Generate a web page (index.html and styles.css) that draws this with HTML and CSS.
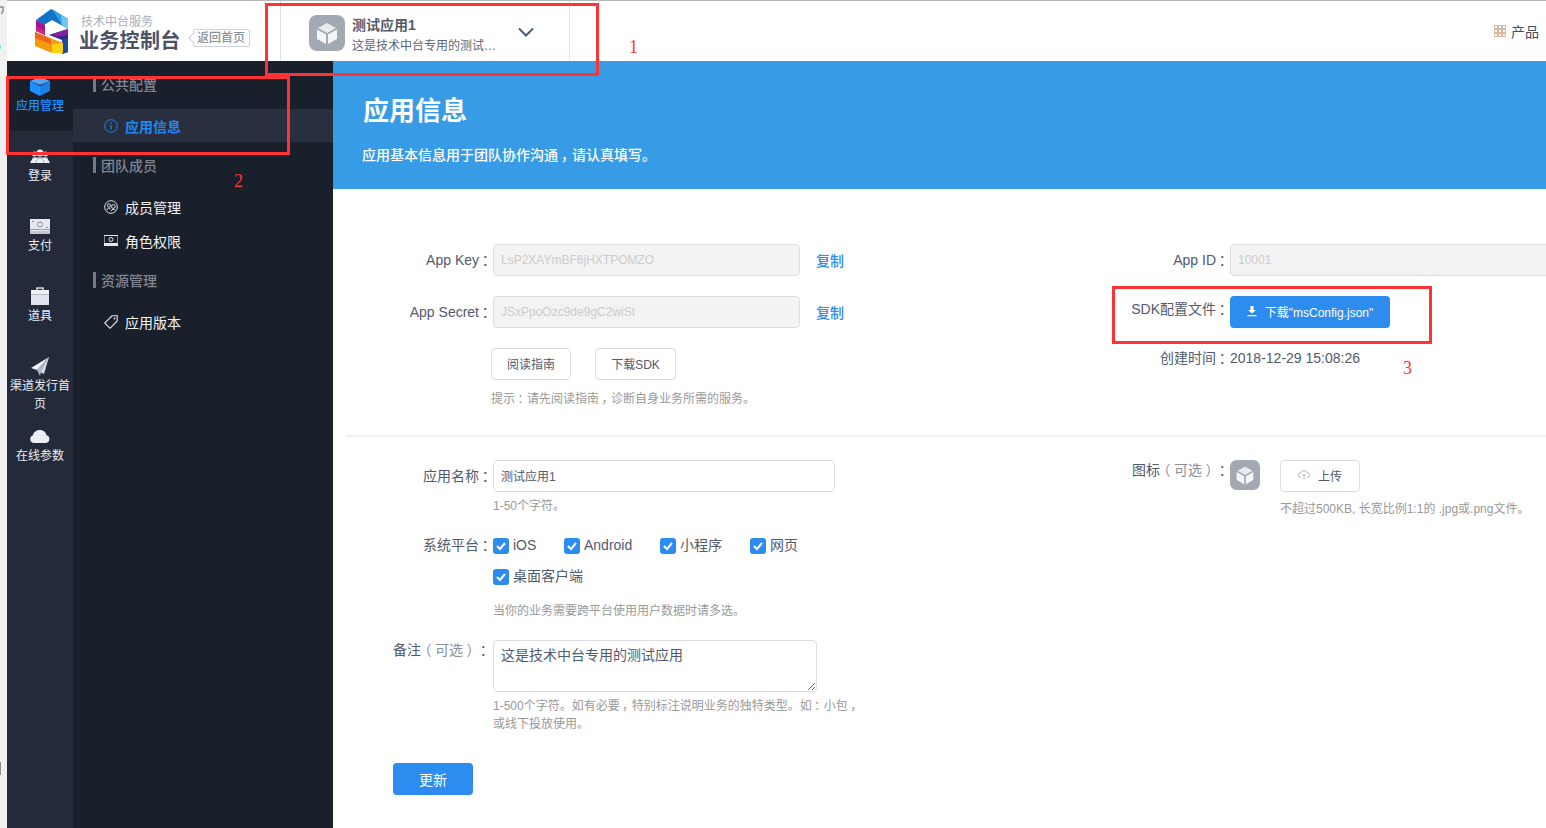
FILE: index.html
```html
<!DOCTYPE html>
<html lang="zh-CN">
<head>
<meta charset="utf-8">
<title>应用信息</title>
<link rel="stylesheet" href="styles.css">
</head>
<body>
<div class="strip">
  <svg viewBox="0 0 7 828" width="7" height="828">
    <path d="M0 7h3v3.500L1.500 14" fill="none" stroke="#8b8b8b" stroke-width="1.500"/>
    <rect x="0" y="45" width="1" height="4" fill="#7fe3ee"/>
    <rect x="0" y="762" width="1" height="13" fill="#8e8e8e"/>
  </svg>
</div>
<div class="app">
  <header class="topbar">
    <a class="brand">
      <svg class="logo" viewBox="0 0 36 48" width="36" height="48">
        <polygon points="2,12 17,1 34,11 34,20 27,17 18,12 10,17 2,12" fill="#1273c9"/>
        <polygon points="18,1 34,11 34,20 27,16" fill="#2f9fe0"/>
        <polygon points="27,7 34,11 34,21 28,18" fill="#6cc6ee"/>
        <polygon points="2,12 11,17 11,27 2,23" fill="#a3188f"/>
        <polygon points="2,19 11,23 11,27 2,23" fill="#d0247a"/>
        <polygon points="15,27 34,21 34,44 28,46 28,32" fill="#2a2a8f"/>
        <polygon points="18,26 34,21 34,27 22,29" fill="#8a1f9a"/>
        <polygon points="28,32 34,30 34,44 28,46" fill="#1b4aa8"/>
        <polygon points="1,24 11,28 29,35 29,45 18,45 1,38" fill="#f59a0c"/>
        <polygon points="1,24 11,28 17,31 17,36 1,30" fill="#f2641e"/>
        <polygon points="18,36 29,35 29,45 18,45" fill="#fbd014"/>
      </svg>
      <div class="brand-text">
        <div class="brand-sub">技术中台服务</div>
        <div class="brand-main">业务控制台</div>
      </div>
      <span class="back-tag">返回首页</span>
    </a>
    <div class="app-select">
      <svg class="cube-tile" viewBox="0 0 36 36" width="36" height="36">
        <rect width="36" height="36" rx="8" fill="#a3a9b2"/>
        <polygon points="18,8 27,13 18,18 9,13" fill="#e9ebee"/>
        <polygon points="8,14.500 17,19.500 17,29 8,24" fill="#f4f5f7"/>
        <polygon points="28,14.500 19,19.500 19,29 28,24" fill="#f4f5f7"/>
      </svg>
      <div class="app-meta">
        <div class="app-name">测试应用1</div>
        <div class="app-desc">这是技术中台专用的测试…</div>
      </div>
      <svg class="chevron" viewBox="0 0 16 10" width="16" height="10"><path d="M1 1.500 8 8.500 15 1.500" fill="none" stroke="#4a5a78" stroke-width="2"/></svg>
    </div>
    <div class="product">
      <svg viewBox="0 0 12 12" width="12" height="12"><g fill="none" stroke="#d9b8a0" stroke-width="1"><rect x=".5" y=".5" width="3" height="3"/><rect x="4.500" y=".5" width="3" height="3"/><rect x="8.500" y=".5" width="3" height="3"/><rect x=".5" y="4.500" width="3" height="3"/><rect x="4.500" y="4.500" width="3" height="3"/><rect x="8.500" y="4.500" width="3" height="3"/><rect x=".5" y="8.500" width="3" height="3"/><rect x="4.500" y="8.500" width="3" height="3"/><rect x="8.500" y="8.500" width="3" height="3"/></g></svg>
      <span>产品</span>
    </div>
  </header>
  <div class="body">
    <nav class="rail">
      <div class="rail-item active">
        <svg viewBox="0 0 20 19" width="20" height="19"><polygon points="0,4 10,9 10,19 0,14" fill="#1e90ff"/><polygon points="20,4 10,9 10,19 20,14" fill="#1a7fe6"/><polygon points="10,0 20,4 10,8 0,4" fill="#4aa8ff"/></svg>
        <span>应用管理</span>
      </div>
      <div class="rail-item">
        <svg viewBox="0 0 20 19" width="20" height="19"><g fill="#eceef3"><circle cx="10" cy="6" r="3.500"/><circle cx="4.500" cy="7" r="2.500"/><circle cx="15.500" cy="7" r="2.500"/><path d="M0 16 3 10.500H17L20 16z"/></g><path d="M6 16c0-3 1.500-5 4-5s4 2 4 5" fill="none" stroke="#9aa0ad" stroke-width=".8"/></svg>
        <span>登录</span>
      </div>
      <div class="rail-item">
        <svg viewBox="0 0 20 19" width="20" height="19"><rect y="2" width="20" height="13" fill="#e6e8ee"/><rect y="12" width="20" height="1" fill="#9aa0ad"/><rect y="14" width="20" height="3" fill="#c2c6d0"/><circle cx="10" cy="7.500" r="2.500" fill="none" stroke="#8a90a0"/><rect x="2" y="4" width="2" height="1" fill="#8a90a0"/><rect x="16" y="10" width="2" height="1" fill="#8a90a0"/></svg>
        <span>支付</span>
      </div>
      <div class="rail-item">
        <svg viewBox="0 0 20 19" width="20" height="19"><path d="M7 3V1h6v2" fill="none" stroke="#d8dbe4" stroke-width="1.500"/><rect x="1" y="3" width="18" height="4" fill="#f0f1f5"/><rect x="1" y="7" width="18" height="1" fill="#b9bdca"/><rect x="1" y="8" width="18" height="10" fill="#e0e3ee"/></svg>
        <span>道具</span>
      </div>
      <div class="rail-item">
        <svg viewBox="0 0 20 19" width="20" height="19"><polygon points="19,0 1,11 7,13" fill="#f0f2f6"/><polygon points="19,0 8,14 14,17" fill="#d3dbe6"/><polygon points="19,0 7,13 10,19 11,15" fill="#aeb7c4"/></svg>
        <span>渠道发行首页</span>
      </div>
      <div class="rail-item">
        <svg viewBox="0 0 20 19" width="20" height="19"><path d="M4 16a4 4 0 0 1-1-7.800C3.500 5 6.500 3 10 3s6 2.500 6.500 5.200A4 4 0 0 1 16 16z" fill="#eceef3"/></svg>
        <span>在线参数</span>
      </div>
    </nav>
    <aside class="subnav">
      <div class="sub-title">公共配置</div>
      <div class="sub-item active">
        <svg viewBox="0 0 14 14" width="14" height="14"><circle cx="7" cy="7" r="6.300" fill="none" stroke="#1e7fe6"/><rect x="6.400" y="6" width="1.300" height="4.500" fill="#1e7fe6"/><rect x="6.400" y="3.500" width="1.300" height="1.400" fill="#1e7fe6"/></svg>
        <span>应用信息</span>
      </div>
      <div class="sub-title sub-gap">团队成员</div>
      <div class="sub-item">
        <svg viewBox="0 0 14 14" width="14" height="14"><circle cx="7" cy="7" r="6.300" fill="none" stroke="#dfe2e8"/><circle cx="5" cy="5.500" r="1.600" fill="none" stroke="#dfe2e8"/><circle cx="9.300" cy="6.500" r="1.900" fill="none" stroke="#dfe2e8"/><path d="M3 10c.5-2 3-2.500 3.500-1M7 11c.3-2 4-2 4.500-.5" fill="none" stroke="#dfe2e8"/></svg>
        <span>成员管理</span>
      </div>
      <div class="sub-item">
        <svg viewBox="0 0 14 14" width="14" height="14"><rect y="1.500" width="14" height="8" fill="none" stroke="#e6e8ee"/><rect y="9.500" width="14" height="2.500" fill="#e6e8ee"/><circle cx="7" cy="5.500" r="2" fill="none" stroke="#e6e8ee"/></svg>
        <span>角色权限</span>
      </div>
      <div class="sub-title sub-gap-sm">资源管理</div>
      <div class="sub-item">
        <svg viewBox="0 0 14 14" width="14" height="14"><path d="M8 .8h5.200V6L6 13.300.7 8z" fill="none" stroke="#e6e8ee" stroke-width="1.100"/><circle cx="10.500" cy="3.500" r=".9" fill="#e6e8ee"/></svg>
        <span>应用版本</span>
      </div>
    </aside>
    <main class="main">
      <section class="banner">
        <h1>应用信息</h1>
        <p>应用基本信息用于团队协作沟通<i class="p">，</i>请认真填写。</p>
      </section>
      <section class="grid top-grid">
        <div class="col">
          <div class="row">
            <label class="label">App Key<i class="p">：</i></label>
            <input class="input disabled" type="text" value="LsP2XAYmBF6jHXTPOMZO" disabled>
            <a class="copy">复制</a>
          </div>
          <div class="row">
            <label class="label">App Secret<i class="p">：</i></label>
            <input class="input disabled" type="text" value="JSxPpoOzc9de9gC2wiSt" disabled>
            <a class="copy">复制</a>
          </div>
          <div class="actions">
            <button class="btn" type="button">阅读指南</button>
            <button class="btn btn-sdk" type="button">下载SDK</button>
          </div>
          <p class="hint hint-actions">提示<i class="p">：</i>请先阅读指南<i class="p">，</i>诊断自身业务所需的服务。</p>
        </div>
        <div class="col">
          <div class="row">
            <label class="label label-wide">App ID<i class="p">：</i></label>
            <input class="input input-id disabled" type="text" value="10001" disabled>
          </div>
          <div class="row">
            <label class="label label-wide label-up">SDK配置文件<i class="p">：</i></label>
            <button class="btn-primary btn-download" type="button">
              <svg viewBox="0 0 10 12" width="10" height="12"><path d="M3.500 1h3v4H9L5 8.500 1 5h2.500zM.5 10h9v1.200h-9z" fill="#fff"/></svg>
              <span>下载"msConfig.json"</span>
            </button>
          </div>
          <div class="row-text">
            <span class="label label-wide">创建时间<i class="p">：</i></span><span class="value">2018-12-29 15:08:26</span>
          </div>
        </div>
      </section>
      <div class="divider"></div>
      <section class="grid bottom-grid">
        <div class="col">
          <div class="row-block">
            <label class="label">应用名称<i class="p">：</i></label>
            <div class="field">
              <input class="input input-name" type="text" value="测试应用1">
              <p class="hint hint-name">1-50个字符。</p>
            </div>
          </div>
          <div class="row-block platforms-row">
            <label class="label label-line">系统平台<i class="p">：</i></label>
            <div class="field">
              <div class="checks">
                <span class="check w-ios"><i class="box"><svg viewBox="0 0 16 16" width="16" height="16"><path d="M4 8l3 3 5-6" fill="none" stroke="#fff" stroke-width="2"/></svg></i><span>iOS</span></span>
                <span class="check w-android"><i class="box"><svg viewBox="0 0 16 16" width="16" height="16"><path d="M4 8l3 3 5-6" fill="none" stroke="#fff" stroke-width="2"/></svg></i><span>Android</span></span>
                <span class="check w-mini"><i class="box"><svg viewBox="0 0 16 16" width="16" height="16"><path d="M4 8l3 3 5-6" fill="none" stroke="#fff" stroke-width="2"/></svg></i><span>小程序</span></span>
                <span class="check"><i class="box"><svg viewBox="0 0 16 16" width="16" height="16"><path d="M4 8l3 3 5-6" fill="none" stroke="#fff" stroke-width="2"/></svg></i><span>网页</span></span>
                <span class="check w-full"><i class="box"><svg viewBox="0 0 16 16" width="16" height="16"><path d="M4 8l3 3 5-6" fill="none" stroke="#fff" stroke-width="2"/></svg></i><span>桌面客户端</span></span>
              </div>
              <p class="hint hint-platform">当你的业务需要跨平台使用用户数据时请多选。</p>
            </div>
          </div>
          <div class="row-block note-row">
            <label class="label label-top label-note">备注<em><i class="q">（</i>可选<i class="q">）</i></em><i class="p">：</i></label>
            <div class="field">
              <textarea class="textarea">这是技术中台专用的测试应用</textarea>
              <p class="hint hint-note">1-500个字符。如有必要<i class="p">，</i>特别标注说明业务的独特类型。如<i class="p">：</i>小包<i class="p">，</i>或线下投放使用。</p>
            </div>
          </div>
          <button class="btn-primary btn-update" type="button">更新</button>
        </div>
        <div class="col">
          <div class="row-block">
            <label class="label label-wide label-top">图标<em><i class="q">（</i>可选<i class="q">）</i></em><i class="p">：</i></label>
            <div class="field">
              <div class="upload-row">
                <svg viewBox="0 0 36 36" width="30" height="30"><rect width="36" height="36" rx="8" fill="#a3a9b2"/><polygon points="18,8 27,13 18,18 9,13" fill="#e9ebee"/><polygon points="8,14.500 17,19.500 17,29 8,24" fill="#f4f5f7"/><polygon points="28,14.500 19,19.500 19,29 28,24" fill="#f4f5f7"/></svg>
                <button class="btn btn-upload" type="button">
                  <svg viewBox="0 0 12 10" width="12" height="10"><path d="M3 7.500H2.500a2.200 2.200 0 0 1 0-4.400C3 1.500 4.500.7 6 .7s3 .8 3.500 2.400a2.200 2.200 0 0 1 0 4.400H9M6 9.500V4.500M4.300 6 6 4.300 7.700 6" fill="none" stroke="#b5b9c2"/></svg>
                  <span>上传</span>
                </button>
              </div>
              <p class="hint hint-upload">不超过500KB, 长宽比例1:1的 .jpg或.png文件。</p>
            </div>
          </div>
        </div>
      </section>
    </main>
  </div>
</div>
<div class="annot annot-1"></div>
<div class="annot annot-2"></div>
<div class="annot annot-3"></div>
<span class="mark mark-1">1</span>
<span class="mark mark-2">2</span>
<span class="mark mark-3">3</span>
</body>
</html>
```

FILE: styles.css
```css
* { box-sizing: border-box; }
html, body { margin: 0; height: 100%; }
body {
  position: relative;
  display: flex;
  height: 828px;
  overflow: hidden;
  background: #fff;
  font-family: "Liberation Sans", "Noto Sans CJK SC", sans-serif;
  font-size: 14px;
  color: #515a6e;
  text-spacing-trim: space-all;
}
p, h1 { margin: 0; }
em { font-style: normal; color: #8a909c; }
.p { font-style: normal; font-feature-settings: "halt"; padding: 0 .3em 0 .2em; }
.q { font-style: normal; font-feature-settings: "halt"; padding: 0 .25em; }

.strip { width: 7px; flex: none; background: #f0f0f0; }
.strip svg { display: block; }
.app { flex: 1; min-width: 0; display: flex; flex-direction: column; }

.topbar {
  height: 61px;
  flex: none;
  display: flex;
  align-items: stretch;
  background: #fff;
  border-top: 1px solid #b5b5b5;
}
.brand { width: 273px; flex: none; display: flex; align-items: flex-start; padding: 7px 0 0 27px; }
.logo { flex: none; }
.brand-text { margin-left: 10px; padding-top: 5px; }
.brand-sub { font-size: 12px; line-height: 16px; color: #a9aebb; padding: 1px 0 0 1px; }
.brand-main { font-size: 20px; line-height: 23px; font-weight: 700; letter-spacing: .3px; color: #4a5366; margin-left: -1px; }
.back-tag {
  position: relative;
  margin: 21px 0 0 12px;
  width: 57px;
  height: 18px;
  border: 1px solid #ccd0d8;
  border-radius: 2px;
  font-size: 12px;
  line-height: 16px;
  text-align: center;
  font-weight: 500;
  color: #8a909c;
}
.back-tag::before {
  content: "";
  position: absolute;
  left: -4px;
  top: 4px;
  width: 7px;
  height: 7px;
  background: #fff;
  border-left: 1px solid #ccd0d8;
  border-bottom: 1px solid #ccd0d8;
  transform: rotate(45deg);
}
.app-select {
  width: 290px;
  height: 59px;
  flex: none;
  display: flex;
  align-items: flex-start;
  padding-left: 28px;
  border-left: 1px solid #e0e2e8;
  border-right: 1px solid #e0e2e8;
}
.cube-tile { flex: none; margin-top: 14px; }
.app-meta { width: 146px; margin-left: 7px; padding-top: 15px; }
.app-name { font-size: 14px; line-height: 18px; font-weight: 700; color: #555c6b; }
.app-desc { font-size: 12px; line-height: 20px; margin-top: 2px; color: #5e6573; white-space: nowrap; }
.chevron { flex: none; margin: 26px 0 0 20px; }
.product { margin-left: auto; padding-right: 7px; display: flex; align-items: center; gap: 5px; font-size: 14px; color: #444b5a; }

.body { flex: 1; min-height: 0; display: flex; }
.rail { width: 66px; flex: none; background: #242a3a; }
.rail-item {
  height: 70px;
  overflow: hidden;
  padding-top: 16px;
  display: flex;
  flex-direction: column;
  align-items: center;
  font-size: 12px;
  line-height: 18px;
  color: #eceef3;
  text-align: center;
}
.rail-item svg { flex: none; margin-bottom: 1px; }
.rail-item.active { background: #1a202b; color: #1e90ff; font-weight: 500; }

.subnav { width: 260px; flex: none; background: #1a202b; padding-top: 6px; }
.sub-title { height: 34px; margin: 0 0 8px 20px; display: flex; align-items: center; padding-left: 8px; position: relative; color: #7f8692; font-size: 14px; font-weight: 500; }
.sub-title::before { content: ""; position: absolute; left: 0; top: 9px; width: 3px; height: 16px; background: #6f7c90; }
.sub-gap { margin-top: 6px; }
.sub-gap-sm { margin-top: 5px; }
.sub-item { height: 34px; display: flex; align-items: center; padding-left: 31px; gap: 7px; color: #f2f3f5; font-size: 14px; }
.sub-item svg { flex: none; }
.sub-item.active { height: 33px; padding-top: 1px; background: #2a2f3f; color: #1e88f5; font-weight: 700; }

.main { flex: 1; min-width: 0; overflow: hidden; background: #fff; }
.banner { height: 128px; padding: 31px 0 0 30px; background: #379be6; color: #fff; }
.banner h1 { font-size: 26px; line-height: 38px; font-weight: 700; }
.banner p { margin: 14px 0 0 -1px; font-size: 14px; line-height: 22px; font-weight: 500; }

.grid { display: grid; grid-template-columns: 734px 500px; padding-left: 13px; }
.top-grid { padding-top: 55px; padding-bottom: 27px; }
.bottom-grid { padding-top: 23px; }

.row { display: flex; align-items: center; height: 32px; margin-bottom: 20px; }
.row-block { display: flex; align-items: flex-start; }
.label { width: 147px; flex: none; text-align: right; line-height: 32px; white-space: nowrap; }
.label-wide { width: 150px; }
.label-up { margin-top: -6px; }
.label-line { line-height: 31px; }
.label-top { line-height: 20px; }
.label-note { padding-right: 2px; }
.field { min-width: 0; }

.input {
  height: 32px;
  width: 307px;
  padding: 0 7px;
  border: 1px solid #dcdee2;
  border-radius: 4px;
  font: 12px "Liberation Sans", "Noto Sans CJK SC", sans-serif;
  color: #515a6e;
  background: #fff;
  outline: none;
}
.input.disabled { background: #f3f3f3; color: #ccc; }
.input-id { width: 400px; }
.input-name { width: 342px; display: block; padding-bottom: 2px; }
.copy { margin-left: 16px; color: #2d8cf0; font-weight: 500; }

.actions { display: flex; gap: 24px; margin-left: 145px; }
.btn {
  height: 32px;
  width: 80px;
  padding: 0 0 2px;
  border: 1px solid #dcdee2;
  border-radius: 4px;
  background: #fff;
  font: 12px "Liberation Sans", "Noto Sans CJK SC", sans-serif;
  color: #515a6e;
}
.btn-sdk { width: 81px; }
.btn-primary {
  height: 32px;
  padding: 0 0 2px;
  border: 0;
  border-radius: 4px;
  background: #2d8cf0;
  color: #fff;
  font: 12px "Liberation Sans", "Noto Sans CJK SC", sans-serif;
}
.btn-download { width: 160px; display: flex; align-items: center; justify-content: center; gap: 8px; }
.btn-update { width: 80px; margin: 30px 0 0 47px; padding: 0; font-size: 14px; display: block; }

.hint { font-size: 12px; line-height: 18px; color: #999; }
.hint-actions { margin: 10px 0 0 145px; }
.hint-name { margin-top: 5px; }
.hint-platform { margin-top: 10px; }
.hint-note { margin-top: 5px; width: 372px; }
.hint-upload { margin: 8px 0 0 50px; white-space: nowrap; }

.row-text { display: flex; line-height: 20px; }
.row-text .label { line-height: 20px; }
.value { color: #515a6e; }

.divider { height: 2px; margin-left: 13px; background: #f2f2f2; }

.platforms-row { margin-top: 15px; }
.checks { width: 340px; display: flex; flex-wrap: wrap; }
.check { height: 31px; display: flex; align-items: center; gap: 4px; color: #515a6e; line-height: 20px; }
.check span { padding-bottom: 1px; }
.box { width: 16px; height: 16px; flex: none; border-radius: 3px; background: #2d8cf0; display: block; }
.box svg { display: block; }
.w-ios { width: 71px; }
.w-android { width: 96px; }
.w-mini { width: 90px; }
.w-full { width: 100%; }
.note-row { margin-top: 20px; }
.textarea {
  display: block;
  width: 324px;
  height: 52px;
  padding: 4px 7px;
  border: 1px solid #dcdee2;
  border-radius: 4px;
  font: 14px/20px "Liberation Sans", "Noto Sans CJK SC", sans-serif;
  color: #515a6e;
  outline: none;
}
.upload-row { display: flex; align-items: flex-start; gap: 20px; }
.btn-upload { display: flex; align-items: center; justify-content: center; gap: 8px; }

.annot { position: absolute; border: 3px solid #f33; }
.annot-1 { left: 265px; top: 3px; width: 334px; height: 73px; }
.annot-2 { left: 6px; top: 76px; width: 284px; height: 79px; }
.annot-3 { left: 1112px; top: 286px; width: 320px; height: 58px; }
.mark { position: absolute; font-family: "Liberation Serif", serif; font-size: 18px; line-height: 20px; color: #f33; }
.mark-1 { left: 629px; top: 37px; }
.mark-2 { left: 234px; top: 171px; }
.mark-3 { left: 1403px; top: 358px; }
```
